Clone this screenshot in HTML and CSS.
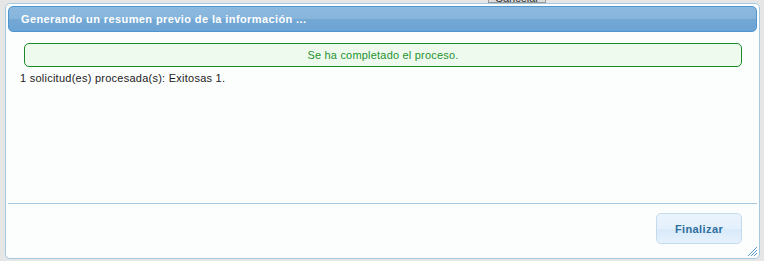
FILE: index.html
```html
<!DOCTYPE html>
<html lang="es">
<head>
    <meta charset="UTF-8">
    <meta name="viewport" content="width=device-width, initial-scale=1.0">
    <title>Resumen previo</title>
    <link rel="stylesheet" href="styles.css">
</head>
<body>
    <!-- Página de fondo (tapada por el diálogo) -->
    <div class="page-bg">
        <div class="page-actions">
            <span class="btn-old">Cancelar</span>
        </div>
    </div>

    <!-- Diálogo modal -->
    <div class="dialog">
        <div class="dialog-title">Generando un resumen previo de la información ...</div>

        <div class="dialog-content">
            <div class="msg-ok">Se ha completado el proceso.</div>
            <div class="resumen">1 solicitud(es) procesada(s): Exitosas 1.</div>
        </div>

        <div class="dialog-buttons">
            <button class="btn-fin" type="button">Finalizar</button>
        </div>

        <!-- Asa para redimensionar -->
        <svg class="resize-handle" width="12" height="12" viewBox="0 0 12 12">
            <path d="M11 2 L2 11 M11 5 L5 11 M11 8 L8 11" stroke="#5d97cc" stroke-width="1" fill="none"/>
        </svg>
    </div>
</body>
</html>
```

FILE: styles.css
```css
* {
    margin: 0;
    padding: 0;
    box-sizing: border-box;
}

body {
    font-family: "Liberation Sans", Arial, sans-serif;
    font-size: 11px;
    color: #222222;
    background-color: #e6e6e6;
    width: 764px;
    height: 261px;
    overflow: hidden;
    position: relative;
}

/* Fondo de la página */
.page-bg {
    height: 261px;
}

.page-actions {
    display: flex;
    justify-content: flex-start;
    padding-left: 488px;
    margin-top: -11px;
}

.btn-old {
    display: inline-block;
    width: 58px;
    height: 14px;
    line-height: 16px;
    overflow: hidden;
    font-size: 11px;
    text-align: center;
    color: #333;
    background: #dcdcdc;
    border: 1px solid #9a9a9a;
}

/* Diálogo */
.dialog {
    position: absolute;
    left: 5px;
    top: 3px;
    width: 755px;
    height: 256px;
    display: flex;
    flex-direction: column;
    padding: 2px;
    background: #fcfdfd;
    border: 1px solid #a6c9e2;
    border-radius: 5px;
}

.dialog-title {
    height: 26px;
    line-height: 24px;
    padding-left: 12px;
    font-weight: bold;
    font-size: 11px;
    letter-spacing: 0.4px;
    color: #ffffff;
    border: 1px solid #4f95d2;
    border-radius: 5px;
    background: linear-gradient(to bottom, #8cb9de 0%, #86b5dc 48%, #73a8d5 52%, #6da4d3 100%);
}

.dialog-content {
    flex: 1;
    padding: 11px 12px 0 12px;
}

.msg-ok {
    margin: 0 3px 0 4px;
    height: 24px;
    line-height: 22px;
    text-align: center;
    letter-spacing: 0.2px;
    color: #1f9330;
    background: #effaef;
    border: 1px solid #1a8a2a;
    border-radius: 5px;
}

.resumen {
    margin-top: 5px;
    line-height: 13px;
    letter-spacing: 0.25px;
}

.dialog-buttons {
    height: 53px;
    display: flex;
    justify-content: flex-end;
    align-items: flex-start;
    padding: 9px 15px 0 0;
    border-top: 1px solid #a6c9e2;
}

.btn-fin {
    width: 86px;
    height: 31px;
    font-family: "Liberation Sans", Arial, sans-serif;
    font-size: 11px;
    font-weight: bold;
    letter-spacing: 0.4px;
    color: #2e6e9e;
    background: linear-gradient(to bottom, #eaf4fd 0%, #e4f0fc 50%, #d9eafa 54%, #e6f2fd 100%);
    border: 1px solid #c5dbec;
    border-radius: 5px;
}

.resize-handle {
    position: absolute;
    right: 1px;
    bottom: 1px;
}
```
